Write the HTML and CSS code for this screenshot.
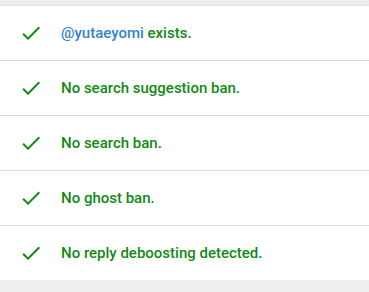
FILE: index.html
```html
<!DOCTYPE html>
<html>
<head>
<meta charset="utf-8">
<link rel="stylesheet" href="styles.css">
</head>
<body>
<div class="card">
  <div class="row">
    <svg class="check" viewBox="0 0 24 24"><path d="M9 16.17L4.83 12l-1.42 1.41L9 19 21 7l-1.41-1.41z"/></svg>
    <span class="text"><a class="user">@yutaeyomi</a> exists.</span>
  </div>
  <div class="row">
    <svg class="check" viewBox="0 0 24 24"><path d="M9 16.17L4.83 12l-1.42 1.41L9 19 21 7l-1.41-1.41z"/></svg>
    <span class="text">No search suggestion ban.</span>
  </div>
  <div class="row">
    <svg class="check" viewBox="0 0 24 24"><path d="M9 16.17L4.83 12l-1.42 1.41L9 19 21 7l-1.41-1.41z"/></svg>
    <span class="text">No search ban.</span>
  </div>
  <div class="row">
    <svg class="check" viewBox="0 0 24 24"><path d="M9 16.17L4.83 12l-1.42 1.41L9 19 21 7l-1.41-1.41z"/></svg>
    <span class="text">No ghost ban.</span>
  </div>
  <div class="row">
    <svg class="check" viewBox="0 0 24 24"><path d="M9 16.17L4.83 12l-1.42 1.41L9 19 21 7l-1.41-1.41z"/></svg>
    <span class="text">No reply deboosting detected.</span>
  </div>
</div>
</body>
</html>
```
FILE: styles.css
```css
html, body {
  margin: 0;
  padding: 0;
  background: #eceef0;
  font-family: Roboto, "Liberation Sans", sans-serif;
}
body {
  padding-top: 6px;
}
.card {
  background: #fff;
  box-shadow: 0 1px 3px rgba(0,0,0,0.25), 0 2px 2px rgba(0,0,0,0.12);
}
.row {
  height: 54px;
  display: flex;
  align-items: center;
  padding-left: 19px;
  gap: 18px;
  border-bottom: 1px solid #dcdcdc;
}
.row:last-child {
  border-bottom: none;
}
.check {
  width: 24px;
  height: 24px;
  fill: #138a13;
  flex: none;
}
.text {
  font-size: 15px;
  font-weight: 500;
  color: #138a13;
}
.user {
  color: #3383d0;
}
```
